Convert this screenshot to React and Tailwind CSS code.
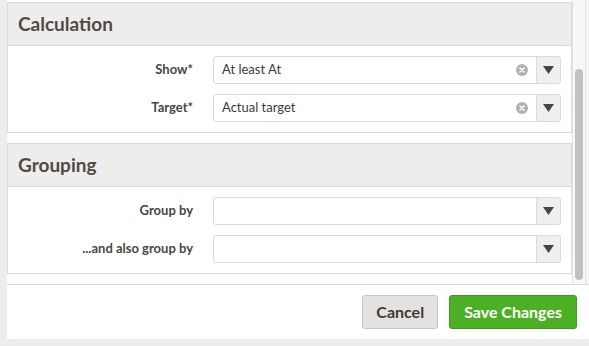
import React from 'react';

const ClearIcon = () => (
  <svg width="12" height="12" viewBox="0 0 12 12">
    <circle cx="6" cy="6" r="6" fill="#b3b0ae" />
    <path d="M4 4l4 4M8 4l-4 4" stroke="#fff" strokeWidth="1.6" strokeLinecap="round" />
  </svg>
);

const Arrow = () => (
  <svg width="11" height="8" viewBox="0 0 11 8">
    <path d="M0 0h11L5.5 8z" fill="#4a4543" />
  </svg>
);

function SelectField({ value, clearable }) {
  return (
    <div className="flex h-[28px] w-[348px] items-stretch rounded-[3px] border border-[#dddad8] bg-white">
      <div className="flex flex-1 items-center pl-[8px] pr-[8px] text-[13px] text-[#3f3a38]">
        <span className="flex-1">{value}</span>
        {clearable && <ClearIcon />}
      </div>
      <div className="flex w-[24px] items-center justify-center rounded-r-[3px] border-l border-[#dddad8] bg-[#f0efed]">
        <Arrow />
      </div>
    </div>
  );
}

function Row({ label, value, clearable }) {
  return (
    <div className="flex items-center">
      <div className="w-[185px] text-right text-[13px] font-bold text-[#4a4543]">{label}</div>
      <div className="ml-[20px]">
        <SelectField value={value} clearable={clearable} />
      </div>
    </div>
  );
}

function Section({ title, rows }) {
  return (
    <div className="border border-[#dcdad8] bg-white">
      <div className="flex h-[43px] items-center border-b border-[#dcdad8] bg-[#eeedeb] pl-[10px] text-[19px] font-bold text-[#504a47]">
        {title}
      </div>
      <div className="flex flex-col gap-[10px] py-[10px]">
        {rows.map((r) => (
          <Row key={r.label} {...r} />
        ))}
      </div>
    </div>
  );
}

export default function App() {
  return (
    <div className="h-[346px] w-[589px] bg-[#eeedeb]" style={{ fontFamily: 'Lato, "Open Sans", sans-serif' }}>
      <div className="ml-[7px] flex h-[339px] w-[582px] flex-col bg-white">
        <div className="flex h-[285px] border-b border-[#dcdad8]">
          <div className="flex w-[565px] flex-col gap-[10px] pt-[2px]">
            <Section
              title="Calculation"
              rows={[
                { label: 'Show*', value: 'At least At', clearable: true },
                { label: 'Target*', value: 'Actual target', clearable: true },
              ]}
            />
            <Section
              title="Grouping"
              rows={[
                { label: 'Group by', value: '' },
                { label: '...and also group by', value: '' },
              ]}
            />
          </div>
          <div className="flex w-[14px] justify-center border-l border-r border-[#e4e2e0] bg-[#f8f8f8] pt-[69px]">
            <div className="h-[211px] w-[8px] rounded-full bg-[#c1c1c1]" />
          </div>
          <div className="w-[3px] bg-[#f3f3f3]" />
        </div>
        <div className="flex flex-1 items-center justify-end gap-[11px] pr-[12px]">
          <button className="h-[34px] rounded-[3px] border border-[#c9c5c3] bg-[#e4e1df] px-[13px] text-[16px] font-bold text-[#3f3a38]">
            Cancel
          </button>
          <button className="h-[34px] rounded-[3px] border border-[#3e9a1b] bg-[#4caf24] px-[14px] text-[16px] font-bold text-white">
            Save Changes
          </button>
        </div>
      </div>
    </div>
  );
}
